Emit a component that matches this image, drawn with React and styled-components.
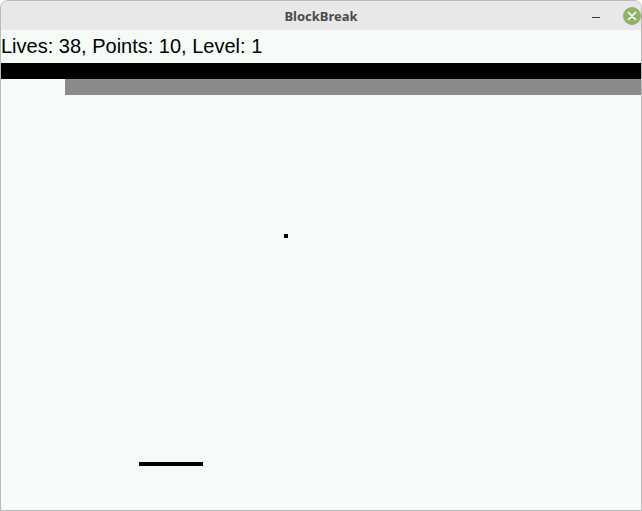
import React from "react";
import styled, { createGlobalStyle } from "styled-components";

const Global = createGlobalStyle`
  html, body { margin: 0; padding: 0; background: #ffffff; }
  body { width: 642px; height: 511px; overflow: hidden; }
`;

const Window = styled.div`
  box-sizing: border-box;
  width: 642px;
  height: 511px;
  border: 1px solid #b9b9b9;
  border-radius: 8px 8px 0 0;
  overflow: hidden;
  display: flex;
  flex-direction: column;
  background: #f6fbf7;
`;

const TitleBar = styled.div`
  height: 29px;
  flex: none;
  background: #e8e8e8;
  display: flex;
  align-items: center;
  justify-content: center;
  position: relative;
`;

const Title = styled.div`
  font-family: "Noto Sans", "DejaVu Sans", sans-serif;
  font-weight: 700;
  font-size: 13px;
  color: #4a4a4a;
  margin-top: 1px;
`;

const Controls = styled.div`
  position: absolute;
  right: 0;
  top: 0;
  height: 29px;
  display: flex;
  align-items: center;
  gap: 23px;
`;

const MinButton = styled.div`
  width: 8px;
  height: 1px;
  background: #3c3c3c;
  margin-top: 4px;
`;

const CloseButton = styled.div`
  width: 18px;
  height: 18px;
  border-radius: 50%;
  background: #8fb36b;
  display: flex;
  align-items: center;
  justify-content: center;
  margin-right: 0;
  margin-top: 1px;
`;

const Field = styled.div`
  position: relative;
  flex: 1;
  background: #f6fbf7;
`;

const Stats = styled.div`
  font-family: "Liberation Sans", Arial, sans-serif;
  font-size: 20px;
  line-height: 23px;
  color: #000;
  padding: 5px 0 0 0;
  margin-bottom: 5px;
  white-space: nowrap;
`;

const BrickRow = styled.div`
  display: flex;
  height: 16px;
`;

const Gap = styled.div`
  width: ${(p) => p.$w}px;
  flex: none;
`;

const Brick = styled.div`
  flex: 1;
  background: ${(p) => p.$color};
`;

const Ball = styled.div`
  position: absolute;
  width: 4px;
  height: 4px;
  background: #000;
`;

const Paddle = styled.div`
  position: absolute;
  width: 64px;
  height: 4px;
  background: #000;
`;

export default function App() {
  return (
    <>
      <Global />
      <Window>
        <TitleBar>
          <Title>BlockBreak</Title>
          <Controls>
            <MinButton />
            <CloseButton>
              <svg width="10" height="10" viewBox="0 0 10 10">
                <path d="M1.5 1.5 L8.5 8.5 M8.5 1.5 L1.5 8.5" stroke="#ffffff" strokeWidth="1.6" strokeLinecap="round" />
              </svg>
            </CloseButton>
          </Controls>
        </TitleBar>
        <Field>
          <Stats>Lives: 38, Points: 10, Level: 1</Stats>
          <BrickRow>
            <Brick $color="#000000" />
          </BrickRow>
          <BrickRow>
            <Gap $w={64} />
            <Brick $color="#8a8a8a" />
          </BrickRow>
          <Ball style={{ left: 283, top: 204 }} />
          <Paddle style={{ left: 138, top: 432 }} />
        </Field>
      </Window>
    </>
  );
}
